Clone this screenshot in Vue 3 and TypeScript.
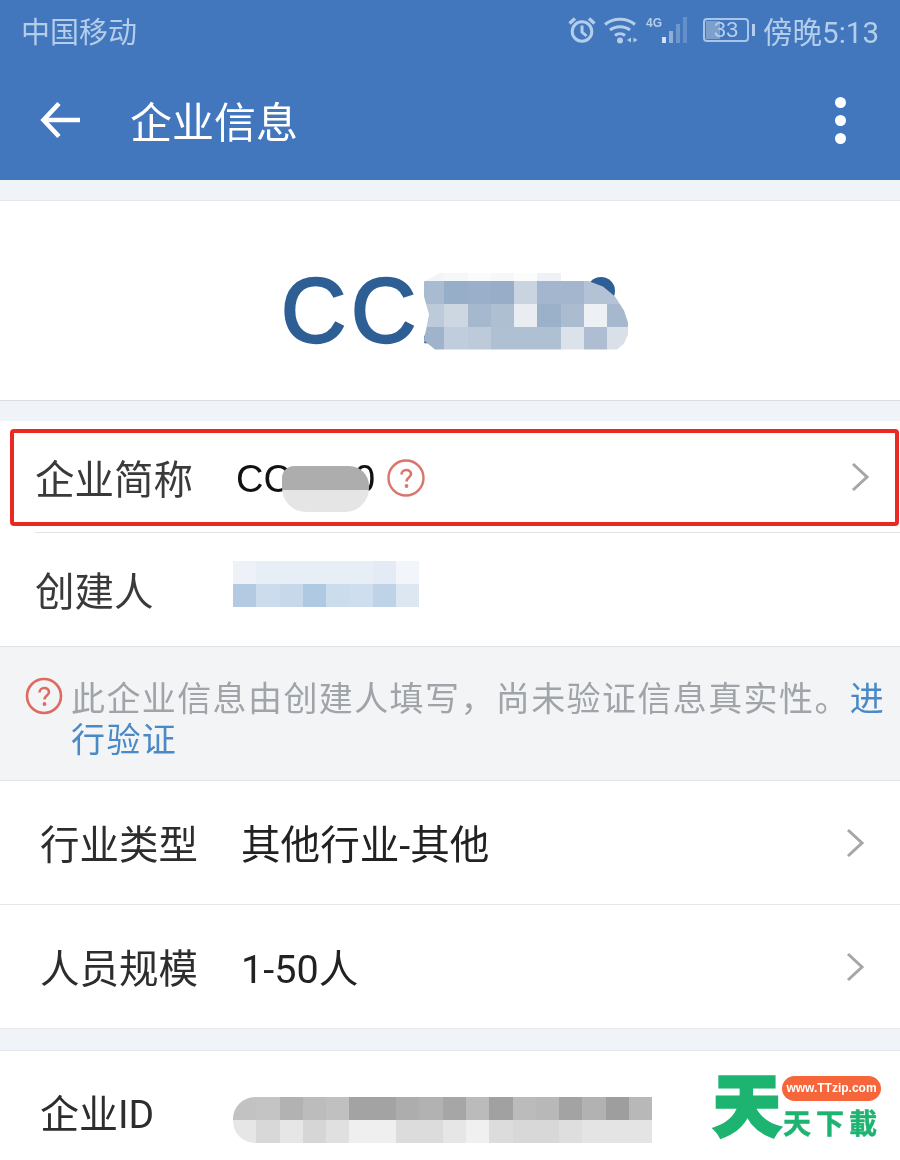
<script setup lang="ts">
type Cell = string

const logoRows: Cell[][] = [
  ['#f2f4f7', '#f6f7f9', '#fafbfc', '#f6f7f9', '#fbfcfc', '#eef1f5', '#ffffff', '#ffffff', '#ffffff'],
  ['#a9bbd0', '#97aec8', '#9ab0ca', '#98aec8', '#c9d4e0', '#a4b6cd', '#a4b6cd', '#b3c2d4', '#b3c2d4'],
  ['#bccad9', '#cdd7e2', '#a5b8ce', '#aebfd2', '#e9edf2', '#9bb0c9', '#abbcd1', '#edf0f4', '#a6b8ce'],
  ['#9fb3cb', '#bfcddc', '#bccad9', '#b0c0d3', '#b0c0d3', '#b0c0d3', '#dbe2e9', '#aebdd1', '#d9e0e8'],
]
const creatorRows: Cell[][] = [
  ['#eef2f8', '#e8eef6', '#e8eef6', '#e8eef6', '#e8eef6', '#e8eef6', '#e4ebf4', '#f2f5f9'],
  ['#b4cae3', '#cddcec', '#c6d8ea', '#b0c9e2', '#cbdcec', '#cedeee', '#bed3e8', '#dde7f2'],
]
const idRows: Cell[][] = [
  ['#c2c2c2', '#c4c4c4', '#b2b2b2', '#bcbcbc', '#c0c0c0', '#a3a3a3', '#a3a3a3', '#adadad', '#b2b2b2', '#a6a6a6', '#bbbbbb', '#a1a1a1', '#bbbbbb', '#b8b8b8', '#a3a3a3', '#b2b2b2', '#9e9e9e', '#b8b8b8'],
  ['#e6e6e6', '#d8d8d8', '#e6e6e6', '#d6d6d6', '#e0e0e0', '#efefef', '#efefef', '#dcdcdc', '#dcdcdc', '#e6e6e6', '#f0f0f0', '#dcdcdc', '#d8d8d8', '#d8d8d8', '#dedede', '#e4e4e4', '#e4e4e4', '#e4e4e4'],
]
</script>

<template>
  <div class="page">
    <header class="head">
      <div class="status">
        <span class="carrier">中国移动</span>
        <div class="status-right">
          <svg class="alarm" width="30" height="30" viewBox="0 0 30 30" fill="none" stroke="#b4cdea" stroke-width="3">
            <circle cx="15" cy="16.5" r="9.8" />
            <path d="M15 10.5V17l4.5 4" />
            <path d="M2.5 8.5 8 3.5M27.5 8.5 22 3.5" stroke-width="3.400" />
          </svg>
          <svg class="wifi" width="36" height="28" viewBox="0 0 36 28" fill="none" stroke="#b4cdea" stroke-width="3">
            <path d="M1 8.5C9 1.5 23 1.5 31 8.5" />
            <path d="M6 14C11.5 9.5 20.5 9.5 26 14" />
            <path d="M11 19.5C14 17 18 17 21 19.5" />
            <circle cx="16" cy="24.5" r="3" fill="#b4cdea" stroke="none" />
            <path d="M27 21.5v5l-4-2.500zM29.500 21.500v5l4-2.500z" fill="#b4cdea" stroke="none" />
          </svg>
          <span class="net">4G</span>
          <svg class="signal" width="28" height="30" viewBox="0 0 28 30">
            <rect x="0" y="22" width="4" height="6" fill="#d3e2f3" />
            <rect x="7" y="16" width="4" height="12" fill="#8dafd8" />
            <rect x="14" y="9" width="4" height="19" fill="#6e97cc" />
            <rect x="21" y="2" width="4" height="26" fill="#648fc8" />
          </svg>
          <div class="battery">
            <span class="level"></span>
            <span class="percent">33</span>
          </div>
          <span class="nub"></span>
          <span class="clock">傍晚5:13</span>
        </div>
      </div>
      <div class="toolbar">
        <svg class="back" width="42" height="38" viewBox="0 0 42 38" fill="none" stroke="#fff" stroke-width="4.600">
          <path d="M40 19H4" />
          <path d="M19 2.500 3.500 19 19 35.500" />
        </svg>
        <h1 class="title">企业信息</h1>
        <div class="dots"><i></i><i></i><i></i></div>
      </div>
    </header>

    <section class="logo-panel">
      <span class="logo-text">CC2</span>
      <div class="logo-mosaic">
        <span class="logo-arc"></span>
        <div class="mosaic-clip">
          <div v-for="(row, r) in logoRows" :key="r" class="cells" :class="{ faint: r === 0 }">
            <span v-for="(c, i) in row" :key="i" class="cell" :style="{ background: c }"></span>
          </div>
        </div>
      </div>
    </section>

    <section class="group first">
      <div class="row short-row inset">
        <span class="label">企业简称</span>
        <div class="name">
          <span>CC</span>
          <span class="name-blur"></span>
          <span class="name-end">0</span>
        </div>
        <svg class="help" width="38" height="38" viewBox="0 0 38 38" fill="none">
          <circle cx="19" cy="19" r="17.500" stroke="#d9756b" stroke-width="2.400" />
          <path d="M14.500 15.500c0-6 9.500-6 9.500-.500 0 3.500-4.500 3.500-4.500 7.500" stroke="#d9756b" stroke-width="2.600" />
          <circle cx="19.500" cy="27" r="1.900" fill="#d9756b" />
        </svg>
        <svg class="chev" width="20" height="30" viewBox="0 0 20 30" fill="none" stroke="#a6a6a6" stroke-width="3">
          <path d="M3 2l14 13L3 28" />
        </svg>
        <span class="redbox"></span>
      </div>
      <div class="row creator">
        <span class="label">创建人</span>
        <div class="creator-mosaic">
          <div v-for="(row, r) in creatorRows" :key="r" class="cells">
            <span v-for="(c, i) in row" :key="i" class="cell" :style="{ background: c }"></span>
          </div>
        </div>
      </div>
    </section>

    <section class="notice">
      <svg class="notice-icon" width="38" height="38" viewBox="0 0 38 38" fill="none">
        <circle cx="19" cy="19" r="17" stroke="#de6a60" stroke-width="2.600" />
        <path d="M14.500 15.500c0-6 9.500-6 9.500-.500 0 3.500-4.500 3.500-4.500 7.500" stroke="#de6a60" stroke-width="2.600" />
        <circle cx="19.500" cy="27" r="1.900" fill="#de6a60" />
      </svg>
      <p class="notice-text">此企业信息由创建人填写，尚未验证信息真实性。<a class="link">进行验证</a></p>
    </section>

    <section class="group">
      <div class="row tall">
        <span class="label wide">行业类型</span>
        <span class="value">其他行业-其他</span>
        <svg class="chev" width="20" height="30" viewBox="0 0 20 30" fill="none" stroke="#a6a6a6" stroke-width="3">
          <path d="M3 2l14 13L3 28" />
        </svg>
      </div>
      <div class="row tall">
        <span class="label wide">人员规模</span>
        <span class="value">1-50人</span>
        <svg class="chev" width="20" height="30" viewBox="0 0 20 30" fill="none" stroke="#a6a6a6" stroke-width="3">
          <path d="M3 2l14 13L3 28" />
        </svg>
      </div>
    </section>

    <section class="group last">
      <div class="row id-row">
        <span class="label wide">企业ID</span>
        <div class="id-mosaic">
          <div v-for="(row, r) in idRows" :key="r" class="cells">
            <span v-for="(c, i) in row" :key="i" class="cell" :style="{ background: c }"></span>
          </div>
        </div>
      </div>
    </section>

    <div class="mark">
      <span class="mark-big">天</span>
      <div class="mark-side">
        <span class="mark-pill">www.TTzip.com</span>
        <span class="mark-name">天下載</span>
      </div>
    </div>
  </div>
</template>

<style scoped>
.page {
  position: relative;
  width: 900px;
  height: 1160px;
  overflow: hidden;
  background: #f0f3f7;
  font-family: "Noto Sans CJK SC", "Liberation Sans", sans-serif;
  color: #333;
  filter: blur(0.4px);
}
.head {
  height: 180px;
  background: #4277bd;
  display: flex;
  flex-direction: column;
}
.status {
  height: 60px;
  padding: 0 21px 0 21px;
  display: flex;
  align-items: center;
  justify-content: space-between;
  color: #b4cdea;
}
.carrier {
  font-size: 29px;
  line-height: 60px;
}
.status-right {
  display: flex;
  align-items: center;
}
.alarm {
  margin-right: 7px;
}
.wifi {
  margin-right: 6px;
}
.net {
  width: 16px;
  margin-top: -14px;
  font: bold 12px/12px "Liberation Sans", sans-serif;
}
.signal {
  margin-right: 13px;
}
.battery {
  position: relative;
  width: 46px;
  height: 24px;
  border: 2px solid #a9c6e8;
  border-radius: 4px;
  box-sizing: border-box;
  display: flex;
  align-items: center;
  justify-content: center;
}
.level {
  position: absolute;
  left: 1px;
  top: 1px;
  bottom: 1px;
  width: 14px;
  background: #7d9fcb;
}
.percent {
  position: relative;
  font: 22px/22px "Liberation Sans", sans-serif;
}
.nub {
  width: 3px;
  height: 12px;
  margin: 0 8px 0 3px;
  background: #b4cdea;
}
.clock {
  margin-top: 5px;
  font-family: Roboto, "Noto Sans CJK SC", sans-serif;
  font-size: 29.500px;
  line-height: 50px;
}
.toolbar {
  flex: 1;
  padding: 0 54px 0 40px;
  display: flex;
  align-items: center;
}
.back {
  margin-right: 48px;
}
.title {
  flex: 1;
  margin: 0;
  color: #fff;
  font-size: 42px;
  font-weight: 400;
  line-height: 60px;
}
.dots {
  display: flex;
  flex-direction: column;
  gap: 7px;
}
.dots i {
  width: 11px;
  height: 11px;
  border-radius: 50%;
  background: #fff;
}
.logo-panel {
  height: 201px;
  margin-top: 20px;
  padding: 21px 0 0 281px;
  background: #fff;
  border-top: 1px solid #e4e7eb;
  border-bottom: 1px solid #d9dfe5;
  box-sizing: border-box;
  display: flex;
  align-items: center;
}
.logo-text {
  width: 140px;
  color: #2e5f94;
  font: 400 90px/100px "Liberation Sans", sans-serif;
  letter-spacing: 5px;
  -webkit-text-stroke: 2.400px #2e5f94;
  white-space: nowrap;
}
.logo-mosaic {
  position: relative;
  width: 208px;
}
.logo-arc {
  position: absolute;
  right: 14px;
  top: 4px;
  width: 28px;
  height: 28px;
  border-radius: 50%;
  background: #2e5f94;
}
.mosaic-clip {
  position: relative;
  clip-path: polygon(3px 9px, 20px 0, 142px 0, 142px 8px, 166px 8px, 182px 14px, 194px 24px, 203px 38px, 207px 50px, 207px 62px, 203px 71px, 196px 77px, 14px 77px, 3px 68px, 8px 42px, 3px 24px);
}
.group {
  background: #fff;
  margin-top: 20px;
}
.first {
  height: 225px;
  border-bottom: 1px solid #dfe2e6;
}
.row {
  position: relative;
  display: flex;
  align-items: center;
}
.short-row {
  height: 112px;
  padding: 0 30px 0 35px;
  box-sizing: border-box;
}
.inset::after {
  content: "";
  position: absolute;
  left: 35px;
  right: 0;
  bottom: 0;
  height: 1px;
  background: #e3e3e3;
}
.label {
  width: 201px;
  font-size: 39.500px;
  line-height: 56px;
  color: #3a3a3a;
}
.name {
  flex: none;
  display: flex;
  align-items: center;
  margin-top: 4px;
  color: #111;
  font: 38px/50px "Liberation Sans", sans-serif;
}
.name-blur {
  position: relative;
  z-index: 1;
  width: 87px;
  height: 46px;
  margin: 20px 0 0 -9px;
  border-radius: 12px 20px 24px 24px;
  background: linear-gradient(#adadad 0 52%, #e5e5e5 52% 100%);
}
.name-end {
  margin-left: -15px;
}
.help {
  margin: 2px 0 0 12px;
}
.chev {
  margin-left: auto;
}
.redbox {
  position: absolute;
  left: 10px;
  right: 1px;
  top: 8px;
  bottom: 7px;
  border: 4px solid #ea2a22;
  border-radius: 4px;
}
.creator {
  height: 112px;
  padding-left: 35px;
  box-sizing: border-box;
}
.creator .label {
  width: 198px;
}
.creator-mosaic {
  margin-top: -10px;
}
.cells {
  display: flex;
  height: 23px;
}
.cells.faint {
  height: 8px;
}
.cell {
  flex: none;
  width: 23.300px;
}
.notice {
  height: 134px;
  box-sizing: border-box;
  padding: 29px 14px 0 25px;
  background: #f2f4f6;
  border-bottom: 1px solid #e2e4e6;
  display: flex;
  align-items: flex-start;
}
.notice-icon {
  flex: none;
  margin: 1px 8px 0 0;
}
.notice-text {
  margin: 0;
  font-size: 34px;
  line-height: 41px;
  letter-spacing: 1.400px;
  color: #a0a4a9;
}
.link {
  color: #4a89c6;
}
.tall {
  height: 124px;
  padding: 0 35px 0 40px;
  box-sizing: border-box;
  border-bottom: 1px solid #e6e6e6;
}
.tall .label {
  margin-top: -2px;
}
.group .tall:last-child {
  height: 123px;
  border-bottom: 0;
}
.group:has(.tall) {
  margin-top: 0;
  border-bottom: 1px solid #e6e8eb;
}
.wide {
  color: #2d2d2d;
}
.value {
  margin-top: 6px;
  color: #222;
  font-family: Roboto, "Noto Sans CJK SC", sans-serif;
  font-size: 39.600px;
  line-height: 56px;
}
.last {
  height: 110px;
  margin-top: 21px;
  border-top: 1px solid #e4e7eb;
}
.id-row {
  height: 108px;
  padding-left: 40px;
}
.id-row .label {
  width: 193px;
  margin-top: 20px;
  font-family: Roboto, "Noto Sans CJK SC", sans-serif;
  font-size: 39px;
}
.id-mosaic {
  margin-top: 30px;
  overflow: hidden;
  border-radius: 22px 0 0 22px;
}
.mark {
  position: absolute;
  left: 713px;
  top: 1064px;
  display: flex;
  align-items: flex-start;
}
.mark-big {
  width: 69px;
  margin-top: -3px;
  color: #1db371;
  font-size: 68px;
  font-weight: 900;
  line-height: 82px;
  -webkit-text-stroke: 3px #1db371;
}
.mark-side {
  display: flex;
  flex-direction: column;
  padding-top: 12px;
}
.mark-pill {
  width: 99px;
  height: 25px;
  border-radius: 13px;
  background: #f7653b;
  color: #fff;
  text-align: center;
  font: 700 12px/25px "Liberation Sans", sans-serif;
}
.mark-name {
  margin-top: 3px;
  padding-left: 1px;
  color: #1db371;
  font-size: 28px;
  font-weight: 700;
  line-height: 36px;
  letter-spacing: 5px;
  -webkit-text-stroke: 0.500px #1db371;
}
</style>

<style>
html,
body {
  margin: 0;
  background: #fff;
}
</style>
